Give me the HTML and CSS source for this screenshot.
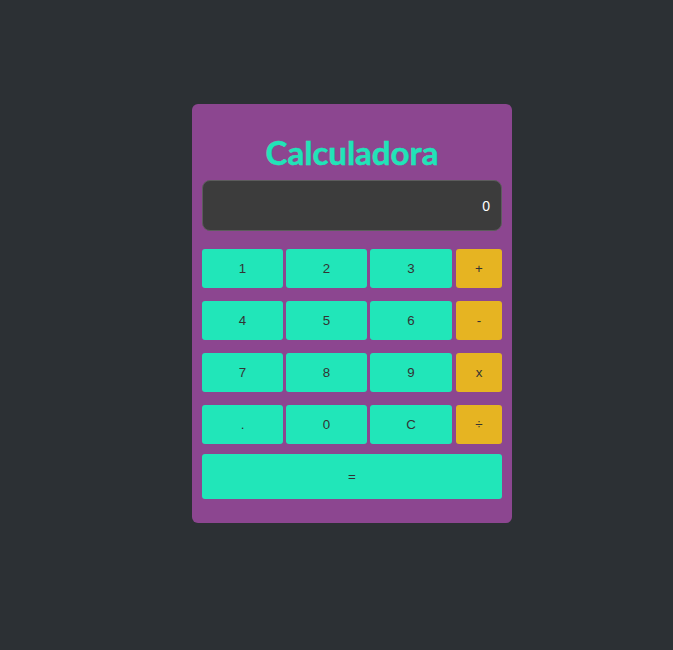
FILE: index.html
```html
<!DOCTYPE html>
<html lang="es">
<head>
<meta charset="utf-8">
<title>Calculadora</title>
<link rel="stylesheet" href="styles.css">
</head>
<body>
<div class="page">
  <div class="calc">
    <h1 class="title">Calculadora</h1>
    <div class="display">0</div>
    <div class="row">
      <button class="btn num">1</button>
      <button class="btn num">2</button>
      <button class="btn num wide">3</button>
      <button class="btn op">+</button>
    </div>
    <div class="row">
      <button class="btn num">4</button>
      <button class="btn num">5</button>
      <button class="btn num wide">6</button>
      <button class="btn op">-</button>
    </div>
    <div class="row">
      <button class="btn num">7</button>
      <button class="btn num">8</button>
      <button class="btn num wide">9</button>
      <button class="btn op">x</button>
    </div>
    <div class="row last">
      <button class="btn num">.</button>
      <button class="btn num">0</button>
      <button class="btn num wide">C</button>
      <button class="btn op">÷</button>
    </div>
    <button class="btn equals">=</button>
  </div>
</div>
</body>
</html>
```

FILE: styles.css
```css
html, body {
  margin: 0;
  padding: 0;
  background: #2c3034;
  height: 100%;
}
.page {
  padding: 104px 0 0 192px;
}
.calc {
  width: 300px;
  background: #8c4690;
  border-radius: 6px;
  padding: 28px 10px 24px 10px;
  display: flex;
  flex-direction: column;
}
.title {
  margin: 0 0 8px 0;
  height: 40px;
  line-height: 40px;
  text-align: center;
  font-family: Lato, "Open Sans", sans-serif;
  font-weight: 700;
  font-size: 33px;
  -webkit-text-stroke: 0.5px #21e3b8;
  color: #21e3b8;
}
.display {
  box-sizing: border-box;
  height: 51px;
  border: 1px solid #5c5c5c;
  border-radius: 8px;
  background: #3c3c3c;
  color: #ffffff;
  font-family: "Liberation Sans", Arial, sans-serif;
  font-size: 14px;
  display: flex;
  align-items: center;
  justify-content: flex-end;
  padding-right: 11px;
  margin-bottom: 18px;
}
.row {
  display: flex;
  gap: 3px;
  margin-bottom: 13px;
}
.row.last {
  margin-bottom: 10px;
}
.btn {
  border: none;
  border-radius: 3px;
  height: 39px;
  padding: 0;
  font-family: "Liberation Sans", Arial, sans-serif;
  font-size: 13.333px;
  color: #333333;
  cursor: pointer;
}
.num {
  width: 81px;
  background: #21e6b9;
}
.num.wide {
  width: 82px;
  margin-right: 1px;
}
.op {
  width: 46px;
  background: #e6b422;
}
.equals {
  width: 300px;
  height: 45px;
  background: #21e6b9;
}
```
